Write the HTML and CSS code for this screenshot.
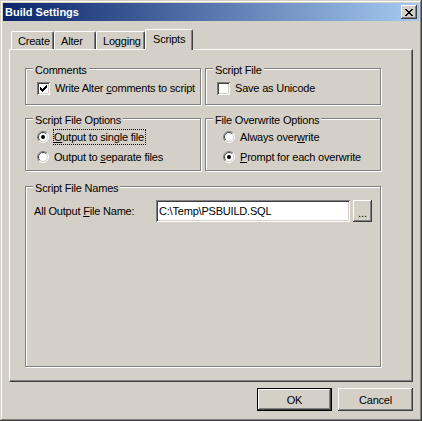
FILE: index.html
```html
<!DOCTYPE html>
<html lang="en">
<head>
  <meta charset="UTF-8">
  <meta name="viewport" content="width=device-width, initial-scale=1.0">
  <title>Build Settings</title>
  <link rel="stylesheet" href="styles.css">
</head>
<body>

  <svg class="defs" xmlns="http://www.w3.org/2000/svg">
    <symbol id="radio-frame" viewBox="0 0 12 12">
      <circle cx="6" cy="6" r="5" fill="#fff"/>
      <path d="M2.1 9.9A5.5 5.5 0 0 1 9.9 2.1" stroke="#808080" fill="none"/>
      <path d="M2.8 9.2A4.5 4.5 0 0 1 9.2 2.8" stroke="#404040" fill="none"/>
      <path d="M9.9 2.1A5.5 5.5 0 0 1 2.1 9.9" stroke="#fff" fill="none"/>
      <path d="M9.2 2.8A4.5 4.5 0 0 1 2.8 9.2" stroke="#d4d0c8" fill="none"/>
    </symbol>
  </svg>

  <div class="window">
    <div class="titlebar">
      <span class="title">Build Settings</span>
      <button class="close-btn" title="Close">
        <svg width="8" height="7" viewBox="0 0 8 7" shape-rendering="crispEdges">
          <path fill="#000" d="M0 0h2v1h-2z M6 0h2v1h-2z M1 1h2v1h-2z M5 1h2v1h-2z M2 2h4v1h-4z M3 3h2v1h-2z M2 4h4v1h-4z M1 5h2v1h-2z M5 5h2v1h-2z M0 6h2v1h-2z M6 6h2v1h-2z"/>
        </svg>
      </button>
    </div>

    <div class="tabs">
      <div class="tab tab-create">Create</div>
      <div class="tab tab-alter">Alter</div>
      <div class="tab tab-logging">Logging</div>
      <div class="tab tab-scripts active">Scripts</div>
    </div>

    <div class="panel">
      <div class="group group-short">
        <div class="group-title">Comments</div>
        <div class="option option-check">
          <span class="checkbox">
            <svg width="7" height="7" viewBox="0 0 7 7" shape-rendering="crispEdges">
              <path fill="#000" d="M6 0h1v1h-1z M5 1h2v1h-2z M0 2h1v1h-1z M4 2h3v1h-3z M0 3h2v1h-2z M3 3h3v1h-3z M0 4h5v1h-5z M1 5h3v1h-3z M2 6h1v1h-1z"/>
            </svg>
          </span>
          <span class="option-text">Write Alter <u>c</u>omments to script</span>
        </div>
      </div>

      <div class="group group-short">
        <div class="group-title">Script File</div>
        <div class="option option-check">
          <span class="checkbox"></span>
          <span class="option-text">Save as Unicode</span>
        </div>
      </div>

      <div class="group group-mid">
        <div class="group-title">Script File Options</div>
        <div class="option option-radio">
          <svg class="radio" viewBox="0 0 12 12"><use href="#radio-frame"/><circle cx="6" cy="6" r="2" fill="#000"/></svg>
          <span class="option-text focused"><u>O</u>utput to single file</span>
        </div>
        <div class="option option-radio">
          <svg class="radio" viewBox="0 0 12 12"><use href="#radio-frame"/></svg>
          <span class="option-text">Output to <u>s</u>eparate files</span>
        </div>
      </div>

      <div class="group group-mid overwrite">
        <div class="group-title">File Overwrite Options</div>
        <div class="option option-radio">
          <svg class="radio" viewBox="0 0 12 12"><use href="#radio-frame"/></svg>
          <span class="option-text">Always over<u>w</u>rite</span>
        </div>
        <div class="option option-radio">
          <svg class="radio" viewBox="0 0 12 12"><use href="#radio-frame"/><circle cx="6" cy="6" r="2" fill="#000"/></svg>
          <span class="option-text"><u>P</u>rompt for each overwrite</span>
        </div>
      </div>

      <div class="group group-tall names">
        <div class="group-title">Script File Names</div>
        <div class="file-row">
          <label class="file-label" for="outputFile">All Output <u>F</u>ile Name:</label>
          <input id="outputFile" class="file-input" type="text" value="C:\Temp\PSBUILD.SQL">
          <button class="btn browse-btn">...</button>
        </div>
      </div>
    </div>

    <div class="actions">
      <button class="btn btn-default">OK</button>
      <button class="btn">Cancel</button>
    </div>
  </div>

</body>
</html>
```

FILE: styles.css
```css
body {
  margin: 0;
  background-color: #d4d0c8;
  font-family: 'Liberation Sans', Arial, sans-serif;
  font-size: 11px;
  letter-spacing: -0.2px;
  color: #000;
}

.defs {
  display: none;
}

.window {
  width: 422px;
  height: 421px;
  box-sizing: border-box;
  padding: 3px;
  background-color: #d4d0c8;
  box-shadow: inset -1px -1px #404040, inset 1px 1px #d4d0c8, inset -2px -2px #808080, inset 2px 2px #fff;
}

/* title bar */
.titlebar {
  height: 18px;
  display: flex;
  align-items: center;
  justify-content: space-between;
  padding: 0 2px;
  background: linear-gradient(to right, #0a246a, #a6caf0);
  color: #fff;
  font-weight: bold;
  line-height: 13px;
  letter-spacing: 0;
}

.close-btn {
  width: 16px;
  height: 14px;
  padding: 0;
  border: none;
  background-color: #d4d0c8;
  box-shadow: inset -1px -1px #404040, inset 1px 1px #fff, inset -2px -2px #808080;
  display: flex;
  align-items: center;
  justify-content: center;
}

.close-btn svg {
  display: block;
}

/* tabs */
.tabs {
  display: flex;
  align-items: flex-end;
  height: 20px;
  margin: 8px 6px 0;
  padding-left: 2px;
}

.tab {
  height: 18px;
  box-sizing: border-box;
  padding: 3px 0 0 6px;
  line-height: 13px;
  border-top: 1px solid #fff;
  border-left: 1px solid #fff;
  border-right: 1px solid #404040;
  border-radius: 2px 2px 0 0;
  box-shadow: inset -1px 0 #808080;
  background-color: #d4d0c8;
}

.tab-create { width: 43px; }
.tab-alter { width: 42px; }
.tab-logging { width: 49px; }
.tab-scripts { width: 48px; }

.tab.active {
  height: 21px;
  margin-bottom: -1px;
  padding-left: 7px;
  position: relative;
  z-index: 1;
}

/* tab page */
.panel {
  height: 333px;
  box-sizing: border-box;
  margin: 0 6px;
  padding: 18px 0 0 15px;
  border: 1px solid;
  border-color: #fff #404040 #404040 #fff;
  box-shadow: inset -1px -1px #808080;
  display: grid;
  grid-template-columns: 176px 176px;
  column-gap: 4px;
  row-gap: 13px;
  align-content: start;
}

.group {
  box-sizing: border-box;
  border: 1px solid #808080;
  box-shadow: inset 1px 1px #fff, 1px 1px #fff;
}

.group-short { height: 37px; }
.group-mid { height: 53px; }
.group-tall { height: 181px; }

.names {
  grid-column: 1 / 3;
  margin-top: 2px;
}

.group-title {
  width: fit-content;
  margin: -5px 0 0 7px;
  padding: 0 2px;
  line-height: 13px;
  background-color: #d4d0c8;
}

/* checkboxes and radios */
.option {
  display: flex;
  align-items: center;
  height: 20px;
  margin-left: 11px;
}

.option-check {
  margin-top: 1px;
}

.overwrite .option {
  margin-left: 17px;
}

.checkbox {
  width: 13px;
  height: 13px;
  flex: none;
  background-color: #fff;
  box-shadow: inset 1px 1px #808080, inset -1px -1px #fff, inset 2px 2px #404040, inset -2px -2px #d4d0c8;
  display: flex;
  align-items: center;
  justify-content: center;
}

.checkbox svg {
  display: block;
}

.radio {
  width: 12px;
  height: 12px;
  flex: none;
  display: block;
}

.option-text {
  margin-left: 4px;
  padding-right: 1px;
  line-height: 14px;
  border: 1px solid transparent;
  white-space: nowrap;
}

.option-text.focused {
  border: 1px dotted #000;
}

/* file name row */
.file-row {
  display: flex;
  align-items: center;
  margin: 5px 0 0 8px;
}

.file-label {
  width: 122px;
}

.file-input {
  width: 194px;
  height: 22px;
  box-sizing: border-box;
  margin: 0;
  padding: 0 3px;
  border: none;
  outline: none;
  background-color: #fff;
  font-family: inherit;
  font-size: 11px;
  letter-spacing: -0.2px;
  color: #000;
  box-shadow: inset 1px 1px #808080, inset -1px -1px #fff, inset 2px 2px #404040, inset -2px -2px #d4d0c8;
}

/* buttons */
.btn {
  height: 23px;
  box-sizing: border-box;
  padding: 0;
  border: none;
  background-color: #d4d0c8;
  font-family: inherit;
  font-size: 11px;
  letter-spacing: -0.2px;
  color: #000;
  box-shadow: inset -1px -1px #404040, inset 1px 1px #fff, inset -2px -2px #808080;
}

.browse-btn {
  width: 19px;
  height: 22px;
  margin-left: 3px;
  padding-top: 4px;
  letter-spacing: 0;
}

.actions {
  display: flex;
  justify-content: flex-end;
  gap: 6px;
  margin: 6px 6px 0 0;
}

.actions .btn {
  width: 75px;
}

.btn-default {
  border: 1px solid #000;
}
```
